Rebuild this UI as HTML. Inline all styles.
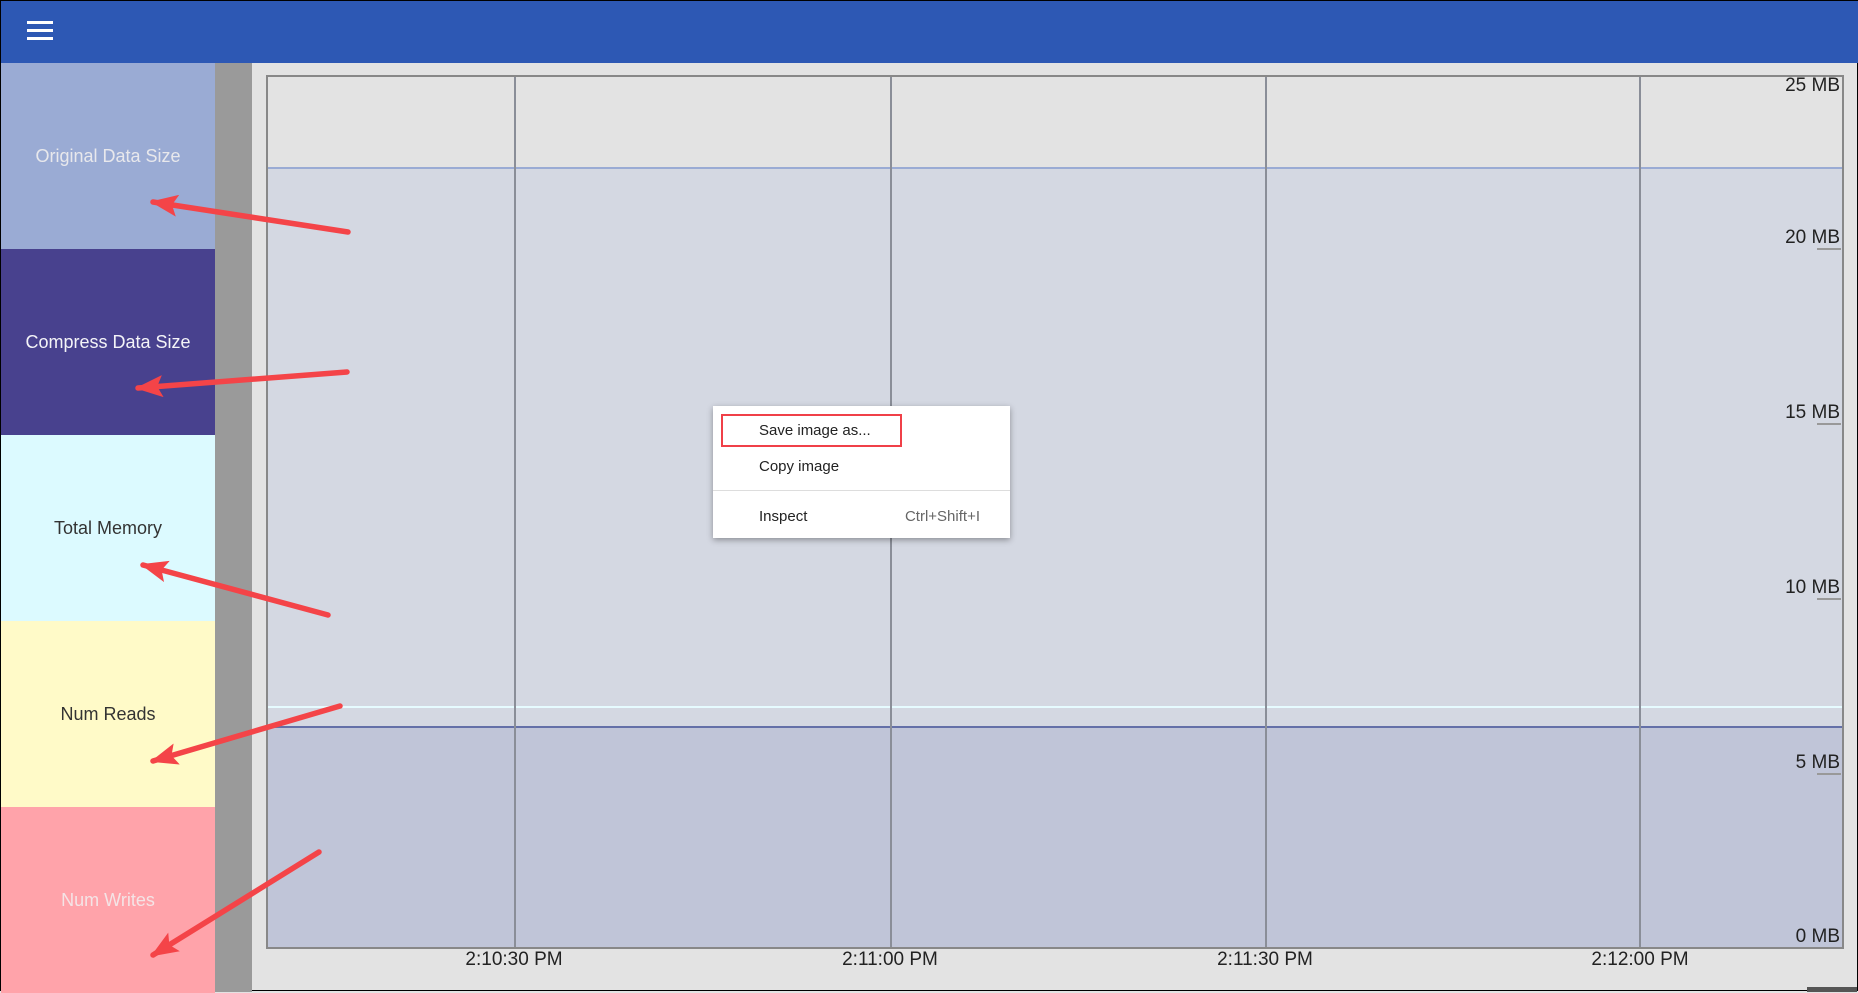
<!DOCTYPE html><html><head><style>
*{margin:0;padding:0;box-sizing:border-box}
body{width:1858px;height:991px;overflow:hidden;font-family:"Liberation Sans",sans-serif;background:#e3e3e3;position:relative;border:1px solid #000}
.a{position:absolute}
.side div{position:absolute;left:0;width:214px;height:186px;display:flex;align-items:center;justify-content:center;font-size:18px}
.yl{position:absolute;right:17px;font-size:19px;color:#222}
.xl{position:absolute;top:948px;font-size:19px;color:#222;width:140px;text-align:center}
.tk{position:absolute;right:16px;width:24px;height:2px;background:#999}
.mi{position:absolute;left:46px;font-size:15px;color:#222}
</style></head><body>
<div class="a" style="left:0;top:0;width:1858px;height:62px;background:#2d58b4"></div>
<div class="a" style="left:26px;top:20px;width:26px;height:3px;background:#fff"></div>
<div class="a" style="left:26px;top:28px;width:26px;height:3px;background:#fff"></div>
<div class="a" style="left:26px;top:36px;width:26px;height:3px;background:#fff"></div>
<div class="side">
<div style="top:62px;background:#9aabd4;color:#e8e8ec">Original Data Size</div>
<div style="top:248px;background:#48418e;color:#f4f4f8">Compress Data Size</div>
<div style="top:434px;background:#dcfaff;color:#333">Total Memory</div>
<div style="top:620px;background:#fffac8;color:#333">Num Reads</div>
<div style="top:806px;background:#ffa3aa;color:#f4e4e6">Num Writes</div>
</div>
<div class="a" style="left:214px;top:62px;width:37px;height:929px;background:#9a9a9a"></div>
<div class="a" style="left:265px;top:74px;width:1578px;height:874px;border:2px solid #888;background:#e3e3e3;overflow:hidden">
<div class="a" style="left:0;top:91px;width:100%;height:560px;background:#d4d8e2"></div>
<div class="a" style="left:0;top:90px;width:100%;height:2px;background:#9aabd4"></div>
<div class="a" style="left:0;top:629px;width:100%;height:2px;background:#e6fbff"></div>
<div class="a" style="left:0;top:650px;width:100%;height:230px;background:#c0c5d8"></div>
<div class="a" style="left:0;top:649px;width:100%;height:2px;background:#6470a8"></div>
<div class="a" style="left:246px;top:0;width:2px;height:100%;background:#8a8e98"></div>
<div class="a" style="left:622px;top:0;width:2px;height:100%;background:#8a8e98"></div>
<div class="a" style="left:997px;top:0;width:2px;height:100%;background:#8a8e98"></div>
<div class="a" style="left:1371px;top:0;width:2px;height:100%;background:#8a8e98"></div>
</div>
<div class="yl" style="top:74px">25 MB</div>
<div class="yl" style="top:226px">20 MB</div><div class="tk" style="top:247px"></div>
<div class="yl" style="top:401px">15 MB</div><div class="tk" style="top:422px"></div>
<div class="yl" style="top:576px">10 MB</div><div class="tk" style="top:597px"></div>
<div class="yl" style="top:751px">5 MB</div><div class="tk" style="top:772px"></div>
<div class="yl" style="top:925px">0 MB</div>
<div class="xl" style="left:443px">2:10:30 PM</div>
<div class="xl" style="left:819px">2:11:00 PM</div>
<div class="xl" style="left:1194px">2:11:30 PM</div>
<div class="xl" style="left:1569px">2:12:00 PM</div>
<div class="a" style="left:1806px;top:986px;width:50px;height:5px;background:#555"></div>
<div class="a" style="left:712px;top:405px;width:297px;height:132px;background:#fff;box-shadow:0 2px 6px rgba(0,0,0,.35)">
<div class="a" style="left:8px;top:8px;width:181px;height:33px;border:2px solid #f04048"></div>
<div class="mi" style="top:16px">Save image as...</div>
<div class="mi" style="top:52px">Copy image</div>
<div class="a" style="left:0;top:84px;width:100%;height:1px;background:#ddd"></div>
<div class="mi" style="top:102px">Inspect</div>
<div class="a" style="right:30px;top:102px;font-size:15px;color:#666">Ctrl+Shift+I</div>
</div>
<svg class="a" style="left:0;top:0" width="1858" height="991">
<defs><marker id="h" markerWidth="5" markerHeight="4" refX="0.5" refY="2" orient="auto" markerUnits="strokeWidth"><path d="M5,0 L0,2 L5,4 L4,2 Z" fill="#f44448"/></marker></defs>
<g stroke="#f44448" stroke-width="5.5" stroke-linecap="round" fill="none" marker-start="url(#h)">
<line x1="152" y1="201" x2="347" y2="231"/>
<line x1="137" y1="387" x2="346" y2="371"/>
<line x1="142" y1="564" x2="327" y2="614"/>
<line x1="152" y1="760" x2="339" y2="705"/>
<line x1="152" y1="954" x2="318" y2="851"/>
</g></svg>
</body></html>
